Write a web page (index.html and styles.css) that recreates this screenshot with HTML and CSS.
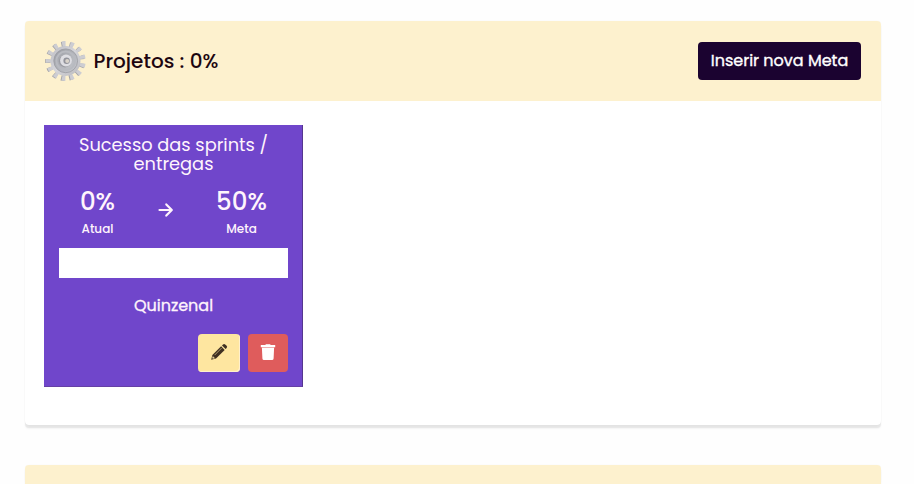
FILE: index.html
```html
<!DOCTYPE html>
<html lang="pt-BR">
<head>
<meta charset="utf-8">
<title>Projetos</title>
<link rel="stylesheet" href="styles.css">
</head>
<body>
<main class="board">
  <section class="panel">
    <header class="panel-header">
      <svg class="gear" viewBox="0 0 42 42" aria-hidden="true">
        <defs>
          <linearGradient id="metal" x1="0" y1="0" x2="1" y2="1"><stop offset="0" stop-color="#bdbdc3"/><stop offset=".5" stop-color="#d5d5da"/><stop offset="1" stop-color="#b9b9bd"/></linearGradient>
          <linearGradient id="dish" x1="0" y1="0" x2="1" y2="1"><stop offset="0" stop-color="#9a9ca3"/><stop offset="1" stop-color="#c9cbd0"/></linearGradient>
        </defs>
        <g fill="none" stroke-width="5.4">
          <circle cx="20" cy="21.3" r="17.1" pathLength="130" stroke="#a3a3a8" stroke-dasharray="4.4 5.6" stroke-dashoffset="-3"/>
          <circle cx="20.8" cy="21" r="17.2" pathLength="130" stroke="#cdcdd2" stroke-dasharray="4.2 5.8" stroke-dashoffset="-3"/>
        </g>
        <circle cx="20.5" cy="21" r="15" fill="url(#metal)"/>
        <circle cx="20.7" cy="20.8" r="11.9" fill="url(#dish)" stroke="#9b9ca2" stroke-width=".8"/>
        <circle cx="20.7" cy="20.8" r="9.3" fill="none" stroke="#b8bac0" stroke-width="2"/>
        <circle cx="20" cy="21.3" r="6.1" fill="#9b9ca3"/>
        <circle cx="21" cy="20.5" r="5.9" fill="#dedee3"/>
        <circle cx="21.6" cy="20.7" r="3.2" fill="#92939b"/>
        <circle cx="22.2" cy="21" r="2" fill="#d9d3ca"/>
      </svg>
      <h1 class="panel-title">Projetos : 0%</h1>
      <button class="new-goal"><span>Inserir nova Meta</span></button>
    </header>
    <div class="panel-body">
      <article class="goal">
        <h2 class="goal-title">Sucesso das sprints /<br>entregas</h2>
        <div class="values">
          <div class="value"><strong>0%</strong><small>Atual</small></div>
          <svg class="arrow" viewBox="0 0 16 16" aria-hidden="true"><path d="M1.5 8h12M8.3 2.4 13.8 8l-5.5 5.6"/></svg>
          <div class="value"><strong>50%</strong><small>Meta</small></div>
        </div>
        <div class="progress"></div>
        <p class="period">Quinzenal</p>
        <div class="actions">
          <button class="edit" aria-label="Editar">
            <svg viewBox="0 0 18 18" aria-hidden="true"><path d="M1.2 16.8 2.4 12 11.1 3.3l3.6 3.6L6 15.6z" fill="#3f3022"/><path d="m12 2.4 1-1q1.1-1 2.2 0l1.4 1.4q1 1.1 0 2.2l-1 1z" fill="#3f3022"/><path d="m4.6 12.1 7-7" stroke="#b8a477" stroke-width=".9"/><path d="m2.8 12.9 2.3 2.3-2.1.6-.8-.8z" fill="#e5d196"/></svg>
          </button>
          <button class="remove" aria-label="Excluir">
            <svg viewBox="0 0 16 18" aria-hidden="true"><path d="M.8 2h4.4l.8-.8h4l.8.8h4.4v2.2H.8zM1.9 4.8h12.2l-.5 10.8q-.1 1.5-1.6 1.5H4q-1.5 0-1.6-1.5z" fill="#fff"/></svg>
          </button>
        </div>
      </article>
    </div>
  </section>
  <section class="panel">
    <header class="panel-header clipped"></header>
  </section>
</main>
</body>
</html>
```
FILE: styles.css
```css
* { box-sizing: border-box; }
html, body { height: 100%; }
body {
  margin: 0;
  overflow: hidden;
  background: #fefefe;
  font-family: Poppins, Inter, sans-serif;
}
button { border: 0; padding: 0; font: inherit; }
.board {
  display: flex;
  flex-direction: column;
  gap: 40px;
  padding: 21px 33px 0 25px;
}
.panel {
  flex: none;
  border-radius: 4px;
  background: #fff;
  box-shadow: 0 3px 1px rgba(0, 0, 0, .06), 0 4px 2px rgba(0, 0, 0, .04), 0 0 1px rgba(0, 0, 0, .08);
}
.panel-header {
  display: flex;
  align-items: center;
  height: 80px;
  padding: 0 20px;
  border-radius: 4px 4px 0 0;
  background: #fdf1ce;
}
.panel-header.clipped { height: 19px; }
.gear { width: 42px; height: 42px; }
.panel-title {
  flex: 1;
  margin: 0 0 0 6.5px;
  color: #1d0610;
  font-size: 20px;
  font-weight: 500;
  line-height: 30px;
  white-space: nowrap;
}
.new-goal {
  width: 163px;
  height: 38px;
  border-radius: 4px;
  background: #1b0330;
  color: #fff;
  font-size: 16px;
  font-weight: 400;
  line-height: 36px;
  white-space: nowrap;
  -webkit-text-stroke: .35px;
}
.panel-body { height: 324px; padding: 24px 19px; }
.goal {
  width: 259px;
  height: 262px;
  padding: 10px 14px 15px 15px;
  border-right: 1px solid #55368f;
  border-bottom: 1px solid #6540a5;
  background: #7046cb;
  color: #fff4fc;
}
.goal-title {
  margin: 0;
  font-size: 17.8px;
  font-weight: 400;
  line-height: 19px;
  text-align: center;
  white-space: nowrap;
}
.values {
  display: grid;
  grid-template-columns: 77px 1fr 93px;
  justify-items: center;
  height: 75px;
  padding-top: 13px;
}
.value { display: flex; flex-direction: column; align-items: center; }
.value strong { font-size: 24.5px; font-weight: 500; line-height: 31px; }
.value small { font-size: 12px; font-weight: 500; line-height: 24px; }
.arrow {
  width: 16px;
  height: 16px;
  margin-top: 16px;
  fill: none;
  stroke: #fff4fc;
  stroke-width: 2.2;
  stroke-linecap: round;
  stroke-linejoin: round;
}
.progress { height: 30px; background: #fff; }
.period {
  margin: 16px 0 0;
  font-size: 16px;
  font-weight: 400;
  line-height: 24px;
  text-align: center;
  -webkit-text-stroke: .3px;
}
.actions { display: flex; justify-content: flex-end; gap: 8px; margin-top: 16px; }
.edit, .remove {
  display: flex;
  align-items: center;
  justify-content: center;
  height: 38px;
  padding-bottom: 2px;
  border-radius: 4px;
}
.edit { width: 42px; background: #fee6a0; box-shadow: inset -1px -1px 0 #fff0cc; }
.remove { width: 40px; background: #df5c5c; }
.edit svg { width: 18px; height: 18px; }
.remove svg { width: 16px; height: 18px; }
```
